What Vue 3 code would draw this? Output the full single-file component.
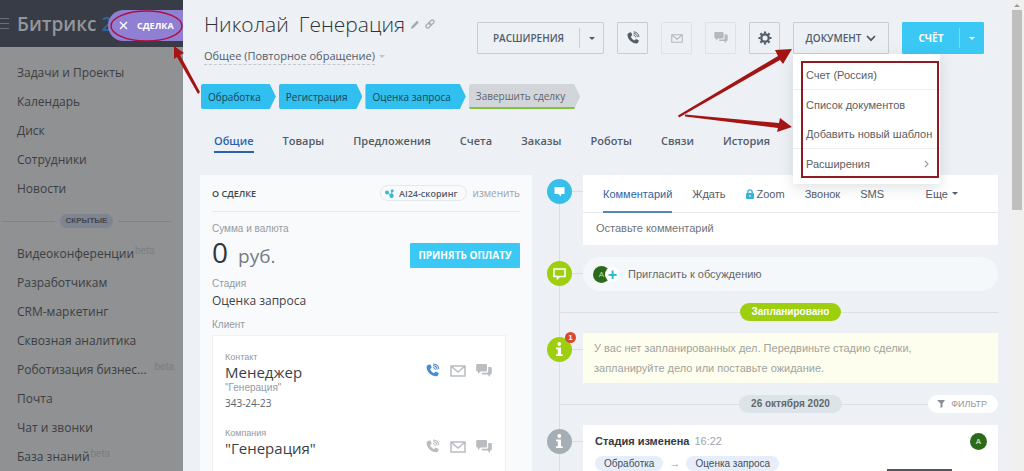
<script setup>
import { ref } from 'vue'

const menuTop = ['Задачи и Проекты', 'Календарь', 'Диск', 'Сотрудники', 'Новости'].map((text) => ({ text }))
const menuHidden = [
  { text: 'Видеоконференции', beta: true },
  { text: 'Разработчикам' },
  { text: 'CRM-маркетинг' },
  { text: 'Сквозная аналитика' },
  { text: 'Роботизация бизнес...', beta: true, wide: true },
  { text: 'Почта' },
  { text: 'Чат и звонки' },
  { text: 'База знаний', beta: true },
]
const stages = ['Обработка', 'Регистрация', 'Оценка запроса']
const tabs = ['Общие', 'Товары', 'Предложения', 'Счета', 'Заказы', 'Роботы', 'Связи', 'История']
const activeTab = ref('Общие')
const clients = [
  { kind: 'Контакт', name: 'Менеджер', note: '"Генерация"', phone: '343-24-23', callable: true },
  { kind: 'Компания', name: '"Генерация"' },
]
const comment = ref('')
</script>

<template>
  <div class="page">
    <svg class="sprite" aria-hidden="true">
      <symbol id="i-phone" viewBox="0 0 16 16">
        <path fill="currentColor" d="M3.2 2.2 5 1.5c.5-.2.9 0 1.100.5l.9 2.300c.2.500 0 .9-.4 1.200l-1.200.9c.8 2.200 2.200 3.600 4.300 4.500l1-1.200c.3-.4.8-.5 1.200-.3l2.200 1c.5.3.6.7.4 1.200l-.8 1.700c-.3.6-.8.9-1.500.9C6.500 14.100 1.900 9.400 1.700 4.300c0-1 .5-1.700 1.500-2.100z" />
        <path fill="none" stroke="currentColor" stroke-width="1.100" d="M8.600 4.700c1.500.2 2.300 1.100 2.500 2.600M8.700 2.800c2.500.2 4 1.700 4.300 4.200M8.800 1c3.600.2 5.700 2.300 6 5.700" />
      </symbol>
      <symbol id="i-mail" viewBox="0 0 16 12">
        <path fill="none" stroke="currentColor" stroke-width="1.500" d="M1 1h14v10H1zM1.500 1.500 8 7l6.500-5.500" />
      </symbol>
      <symbol id="i-chat" viewBox="0 0 16 14">
        <path fill="currentColor" d="M1.500 0h8.200c.8 0 1.300.5 1.300 1.300v4.900c0 .8-.5 1.300-1.300 1.300H4.500L2 10V7.500h-.5C.7 7.500.200 7 .200 6.200V1.300C.200.500.700 0 1.500 0zM12.200 3h2.300c.8 0 1.300.5 1.300 1.300v4.900c0 .8-.5 1.300-1.300 1.300H14V13l-2.500-2.500H7c-.8 0-1.300-.5-1.300-1.300v-.5h4.700c1.100 0 1.800-.7 1.800-1.800z" />
      </symbol>
    </svg>

    <aside class="side">
      <header class="brand">
        <span class="burger"><i></i><i></i><i></i></span>
        <span class="logo">Битрикс <b>24</b></span>
        <button class="deal-tab">
          <svg width="9" height="9" viewBox="0 0 9 9"><path d="M1 1l7 7M8 1 1 8" fill="none" stroke="#fff" stroke-width="1.400" /></svg>
          СДЕЛКА
        </button>
        <svg class="ring" viewBox="0 0 73 32"><ellipse cx="36.500" cy="16" rx="35.500" ry="15" fill="none" stroke="#ad1040" stroke-width="1.500" /></svg>
      </header>
      <nav class="menu">
        <a v-for="m in menuTop" :key="m.text" href="#">{{ m.text }}</a>
        <div class="hidden-line"><span>СКРЫТЫЕ</span></div>
        <a v-for="m in menuHidden" :key="m.text" href="#">{{ m.text }}<sup v-if="m.beta" :class="{ wide: m.wide }">beta</sup></a>
      </nav>
    </aside>

    <main class="panel">
      <header class="top">
        <div class="heading">
          <h1>
            <span>Николай</span><span>Генерация</span>
            <svg class="pen" width="8" height="9" viewBox="0 0 8 9"><path d="M0 9l.6-2.600L6 .8 7.800 2.500 2.500 8z" fill="#a4a9ae" /></svg>
            <svg width="10" height="10" viewBox="0 0 10 10"><g fill="none" stroke="#a4a9ae" stroke-width="1.200" transform="rotate(-45 5 5)"><rect x="0" y="3.200" width="5.600" height="3.600" rx="1.800" /><rect x="4.400" y="3.200" width="5.600" height="3.600" rx="1.800" /></g></svg>
          </h1>
          <button class="funnel"><span>Общее (Повторное обращение)</span><i class="caret pale"></i></button>
        </div>
        <div class="actions">
          <div class="split">
            <button class="split-main">РАСШИРЕНИЯ</button>
            <button class="split-drop" aria-label="Ещё расширения"><i class="caret"></i></button>
          </div>
          <button class="square" aria-label="Позвонить"><svg width="14" height="14"><use href="#i-phone" /></svg></button>
          <button class="square dim" aria-label="Письмо"><svg width="12" height="9"><use href="#i-mail" /></svg></button>
          <button class="square dim" aria-label="Чат"><svg width="14" height="12"><use href="#i-chat" /></svg></button>
          <button class="square" aria-label="Настройки">
            <svg width="14" height="14" viewBox="0 0 14 14"><circle cx="7" cy="7" r="3.700" fill="none" stroke="#525c69" stroke-width="2.200" /><path d="M7 .5v2M7 11.500v2M.5 7h2M11.500 7h2M2.400 2.400l1.400 1.400M10.200 10.200l1.400 1.400M2.400 11.600l1.400-1.400M10.200 3.800l1.400-1.400" stroke="#525c69" stroke-width="2.200" /></svg>
          </button>
          <div class="doc">
            <button class="doc-btn">ДОКУМЕНТ
              <svg width="10" height="7" viewBox="0 0 10 7"><path d="M1 1l4 4.200L9 1" fill="none" stroke="#525c69" stroke-width="1.800" /></svg>
            </button>
            <div class="drop">
              <div class="group"><button>Счет (Россия)</button></div>
              <div class="group"><button>Список документов</button><button>Добавить новый шаблон</button></div>
              <div class="group"><button>Расширения
                <svg width="5" height="8" viewBox="0 0 5 8"><path d="M1 1l3 3-3 3" fill="none" stroke="#9a9fa5" stroke-width="1.200" /></svg>
              </button></div>
            </div>
          </div>
          <div class="split blue">
            <button class="split-main">СЧЁТ</button>
            <button class="split-drop" aria-label="Ещё счёт"><i class="caret"></i></button>
          </div>
        </div>
      </header>

      <div class="stages">
        <button v-for="s in stages" :key="s">{{ s }}</button>
        <button class="last">Завершить сделку</button>
      </div>

      <nav class="tabs">
        <a v-for="t in tabs" :key="t" href="#" :class="{ on: t === activeTab }" @click.prevent="activeTab = t">{{ t }}</a>
      </nav>

      <div class="columns">
        <section class="card">
          <header class="card-head">
            <h2>О СДЕЛКЕ</h2>
            <button class="score">
              <svg width="9" height="9" viewBox="0 0 9 9"><path d="M1.800 3.500 6.500 6.500 7 1.500" fill="none" stroke="#3ab9d4" /><circle cx="2" cy="3.500" r="2" fill="#3ab9d4" /><circle cx="7.200" cy="1.800" r="1.500" fill="#3ab9d4" /><circle cx="6.500" cy="6.800" r="2.200" fill="#3ab9d4" /></svg>
              AI24-скоринг
            </button>
            <a href="#" class="edit">изменить</a>
          </header>
          <p class="label">Сумма и валюта</p>
          <div class="sum">
            <span class="num">0</span><span class="cur">руб.</span>
            <button>ПРИНЯТЬ ОПЛАТУ</button>
          </div>
          <p class="label">Стадия</p>
          <p class="value">Оценка запроса</p>
          <p class="label client">Клиент</p>
          <div class="clients">
            <div v-for="c in clients" :key="c.kind" class="client-row">
              <div class="who">
                <small>{{ c.kind }}</small>
                <strong>{{ c.name }}</strong>
                <small v-if="c.note" class="note">{{ c.note }}</small>
                <span v-if="c.phone">{{ c.phone }}</span>
              </div>
              <div class="links">
                <button :class="{ live: c.callable }" aria-label="Позвонить"><svg width="15" height="15"><use href="#i-phone" /></svg></button>
                <button aria-label="Письмо"><svg width="16" height="12"><use href="#i-mail" /></svg></button>
                <button aria-label="Чат"><svg width="16" height="14"><use href="#i-chat" /></svg></button>
              </div>
            </div>
          </div>
        </section>

        <section class="feed">
          <div class="event">
            <span class="dot cyan"><svg width="11" height="11" viewBox="0 0 11 11"><path d="M.5 1h10v7H7v2.500L4.500 8h-4z" fill="#fff" /></svg></span>
            <div class="body comment">
              <div class="kinds">
                <a href="#" class="on">Комментарий</a><a href="#">Ждать</a>
                <a href="#" class="zoom"><svg width="8" height="10" viewBox="0 0 8 10"><rect y="4" width="8" height="6" rx="1" fill="#35b3dd" /><path d="M1.800 4.500V3a2.200 2.200 0 0 1 4.400 0v1.500" fill="none" stroke="#35b3dd" stroke-width="1.300" /><path d="M4 6v2" stroke="#fff" /></svg>Zoom</a>
                <a href="#">Звонок</a><a href="#">SMS</a>
                <a href="#" class="more">Еще<i class="caret"></i></a>
              </div>
              <input v-model="comment" type="text" placeholder="Оставьте комментарий" aria-label="Комментарий" />
            </div>
          </div>

          <div class="event">
            <span class="dot lime"><svg width="13" height="12" viewBox="0 0 13 12"><path d="M1 1h11v7.500H6.500L4.500 10.500v-2H1z" fill="none" stroke="#fff" stroke-width="1.600" /></svg></span>
            <button class="body invite">
              <span class="ava">A</span><span class="plus">+</span>Пригласить к обсуждению
            </button>
          </div>

          <div class="mark"><span class="planned">Запланировано</span></div>

          <div class="event">
            <span class="dot lime"><svg width="9" height="15" viewBox="0 0 9 15"><circle cx="4.300" cy="2" r="1.900" fill="#fff" /><path d="M1 5.500h5v6.700h1.700V14H1v-1.800h1.800V7.300H1z" fill="#fff" /></svg><em>1</em></span>
            <div class="body notice">У вас нет запланированных дел. Передвиньте стадию сделки, запланируйте дело или поставьте ожидание.</div>
          </div>

          <div class="mark">
            <span class="date">26 октября 2020</span>
            <button class="filter"><svg width="8" height="8" viewBox="0 0 8 8"><path d="M0 0h8L5.500 3.500V7l-2 1V3.500z" fill="#8b9095" /></svg>ФИЛЬТР</button>
          </div>

          <div class="event">
            <span class="dot grey"><svg width="9" height="15" viewBox="0 0 9 15"><circle cx="4.300" cy="2" r="1.900" fill="#fff" /><path d="M1 5.500h5v6.700h1.700V14H1v-1.800h1.800V7.300H1z" fill="#fff" /></svg></span>
            <div class="body change">
              <div class="change-head"><b>Стадия изменена</b><time>16:22</time><span class="user">A</span></div>
              <div class="flow"><span>Обработка</span><i>→</i><span>Оценка запроса</span></div>
            </div>
          </div>
        </section>
      </div>
      <span class="status"></span>
      <svg class="arrows right" width="116" height="88" viewBox="0 0 116 88"><g fill="#a31414"><path d="M1 75.500 101 16l-3-6 17-1-9 15-3-4L2 77.500z" /><path d="M8 74.500 102 83l1-5 12 9-15 5 1-4L8 76.500z" /></g></svg>
    </main>

    <div class="scroll"><i></i><span></span></div>
    <svg class="arrows left" width="30" height="50" viewBox="0 0 30 50"><path d="M2 0 12 7 8 9 28 46l-2 2L5 11 2 13z" fill="#a31414" /></svg>
  </div>
</template>

<style>
body { overflow: hidden; }
</style>

<style scoped>
* { box-sizing: border-box; }
.page { position: relative; display: flex; height: 100vh; overflow: hidden; background: #edf1f5; color: #525c69; font-family: "Open Sans", "Noto Sans", sans-serif; font-size: 11px; }
.sprite { position: absolute; width: 0; height: 0; }
button { margin: 0; padding: 0; border: 0; background: none; color: inherit; font: inherit; white-space: nowrap; cursor: pointer; }
a { color: inherit; text-decoration: none; }
h1, h2, p { margin: 0; font-weight: 400; }
svg { flex: none; }
.caret { border: 4px solid transparent; border-top-color: currentColor; border-bottom: 0; }

.side { flex: none; width: 183px; background: #8f9193; }
.brand { position: relative; display: flex; align-items: center; height: 47px; background: #383c46; }
.burger { display: grid; gap: 4px; width: 9px; margin-right: 8px; }
.burger i { height: 1px; background: #69707a; }
.logo { color: #93969b; font-size: 19px; font-weight: 600; white-space: nowrap; }
.logo b { color: #276a91; font-weight: 600; }
.deal-tab { position: absolute; top: 10px; right: 0; display: flex; align-items: center; gap: 9px; width: 75px; height: 31px; padding-left: 11px; border-radius: 16px 0 0 16px; background: #9080d4; color: #fff; font-size: 9px; font-weight: 700; }
.ring { position: absolute; top: 10px; right: 0; width: 73px; height: 32px; }
.menu { padding-top: 11px; }
.menu a { display: block; height: 29px; padding-left: 17px; color: #3c3e41; font-size: 12px; line-height: 29px; white-space: nowrap; }
.menu sup { position: relative; bottom: 4px; margin-left: 1px; color: #7a7d81; font-family: "Liberation Sans", sans-serif; font-size: 10px; line-height: 10px; vertical-align: baseline; }
.menu sup.wide { margin-left: 8px; }
.hidden-line { display: flex; align-items: center; gap: 5px; height: 36px; padding: 0 12px 0 2px; }
.hidden-line::before, .hidden-line::after { content: ""; flex: 1; height: 1px; background: #7e8389; }
.hidden-line span { padding: 0 6px; border-radius: 7px; background: #7f858f; color: #42464e; font: 700 8px/14px "Liberation Sans", sans-serif; }

.panel { position: relative; flex: 1; min-width: 0; }
.top { display: flex; justify-content: space-between; height: 83px; padding: 0 26px 0 21px; }
.heading { padding-top: 6px; }
h1 { display: flex; align-items: center; gap: 10px; height: 36px; color: #2f3338; font-size: 21px; font-weight: 300; white-space: nowrap; }
h1 svg { margin-left: -4px; }
.funnel { display: flex; align-items: center; gap: 4px; margin-top: 5px; }
.funnel span { border-bottom: 1px dashed #c3c7cb; line-height: 17px; }
.caret.pale { border-width: 3px 3px 0; color: #c0c5ca; }
.actions { display: flex; gap: 13px; height: 32px; margin-top: 22px; font-size: 10px; }
.split, .square, .doc-btn { display: flex; align-items: center; border: 1px solid #c6cdd3; border-radius: 1px; }
.split { width: 127px; font-weight: 600; }
.split-main { flex: 1; text-align: center; }
.split-drop { display: grid; place-items: center; width: 24px; height: 20px; border-left: 1px solid #c6cdd3; }
.split-drop .caret { border-width: 3px 3px 0; }
.split.blue { width: 82px; border-color: #3bc8f5; background: #3bc8f5; color: #fff; font-weight: 700; }
.blue .split-drop { border-color: #7adcf9; }
.square { justify-content: center; width: 31px; }
.square.dim { border-color: #dde2e6; color: #b4b9be; }
.doc { position: relative; width: 96px; }
.doc-btn { justify-content: center; gap: 5px; width: 100%; height: 32px; font-weight: 600; }
.drop { position: absolute; z-index: 3; top: 32px; left: 0; width: 147px; padding: 6px 0; background: #fff; box-shadow: 0 4px 12px rgba(80, 95, 110, .18); }
.drop::after { content: ""; position: absolute; top: 7px; right: 1px; bottom: 6px; left: 8px; border: 2px solid #8e1a22; pointer-events: none; }
.group + .group { border-top: 1px solid #eceef0; }
.drop button { display: flex; align-items: center; justify-content: space-between; width: 100%; height: 29px; padding: 0 11px 0 13px; color: #5a5e63; font: 11px "Liberation Sans", sans-serif; }

.stages { display: flex; gap: 3px; padding: 1px 0 0 18px; }
.stages button { height: 25px; padding: 0 15px 0 7px; border-radius: 2px; background: #31bff0; color: #1c4251; font-size: 10px; clip-path: polygon(0 0, calc(100% - 6px) 0, 100% 50%, calc(100% - 6px) 100%, 0 100%); }
.stages .last { border-bottom: 2px solid #7fc43a; background: #d2d6da; color: #5d6268; }

.tabs { display: flex; gap: 29px; margin: 21px 0 22px; padding-left: 31px; font-weight: 600; line-height: 21px; }
.tabs a { border-bottom: 2px solid transparent; white-space: nowrap; }
.tabs .on { border-color: #2b62ae; color: #2b62ae; }

.columns { display: grid; grid-template-columns: 332fr 451fr; gap: 15px; padding: 0 12px 0 17px; }
.card { padding: 0 12px; background: #f9fafc; min-height: 300px; }
.card-head { display: flex; align-items: center; gap: 6px; height: 37px; border-bottom: 1px solid #e6e9ec; }
h2 { flex: 1; color: #3e454d; font-size: 9px; font-weight: 600; }
.score { display: flex; align-items: center; gap: 5px; height: 16px; padding: 0 8px 0 4px; border: 1px solid #e3e8eb; border-radius: 8px; font-size: 9px; font-weight: 600; }
.edit { color: #9ba0a6; font-size: 10px; }
.label { color: #959ba2; font: 10px/14px "Liberation Sans", sans-serif; }
.card-head + .label { margin-top: 10px; }
.sum { display: flex; align-items: baseline; height: 38px; margin-bottom: 3px; }
.num { margin-right: 10px; color: #30363d; font-size: 28px; line-height: 32px; }
.cur { flex: 1; color: #747b83; font-size: 19px; line-height: 32px; }
.sum button { align-self: center; width: 110px; height: 25px; border-radius: 1px; background: #3bc8f5; color: #fff; font-size: 10px; font-weight: 700; }
.value { color: #3e444b; font-size: 12px; line-height: 20px; }
.label.client { margin-top: 7px; }
.clients { display: grid; gap: 15px; margin: 3px 14px 0 0; padding: 15px 13px 20px 12px; border: 1px solid #eff1f3; background: #fff; }
.client-row { display: flex; justify-content: space-between; }
.who { display: grid; align-content: start; }
.who small { color: #959ba2; font: 9px/12px "Liberation Sans", sans-serif; }
.who .note { font-size: 10px; line-height: 13px; }
.who strong { color: #3a3f45; font-size: 15px; font-weight: 400; line-height: 18px; }
.who span { color: #5c6269; font-size: 10px; line-height: 18px; }
.links { display: flex; align-items: center; gap: 10px; height: 39px; color: #b9bdc1; }
.links .live { color: #4a8dca; }
.links button { display: grid; }

.feed { position: relative; display: grid; align-content: start; gap: 12px; font-family: "Liberation Sans", sans-serif; }
.feed::before { content: ""; position: absolute; top: 16px; bottom: 0; left: 12px; width: 1px; background: #d9dee3; }
.event { position: relative; display: flex; gap: 11px; }
.event::before { content: ""; position: absolute; top: 16px; left: 25px; width: 11px; height: 1px; background: #d9dee3; }
.dot { position: relative; flex: none; display: grid; place-items: center; width: 25px; height: 25px; margin-top: 4px; border-radius: 50%; }
.dot.cyan { background: #35bfea; }
.dot.lime { background: #9dcf0f; }
.dot.grey { background: #a5adb5; }
.dot em { position: absolute; top: -5px; right: -4px; width: 11px; height: 11px; border-radius: 50%; background: #d64b2e; color: #fff; font: 700 8px/11px "Liberation Sans", sans-serif; text-align: center; }
.body { flex: 1; min-width: 0; background: #fff; }
.kinds { display: flex; gap: 20px; height: 38px; padding: 0 40px 0 20px; border-bottom: 1px solid #e7eaed; line-height: 38px; }
.kinds .on { border-bottom: 2px solid #5a87b8; color: #2f62a0; height: 38px; }
.kinds .zoom { display: flex; align-items: center; gap: 3px; }
.kinds .more { display: flex; align-items: center; gap: 4px; margin-left: auto; }
.more .caret { border-width: 3px 3px 0; }
.comment input { display: block; width: 100%; height: 32px; padding: 0 13px 3px; border: 0; outline: 0; background: none; font: 11px "Liberation Sans", sans-serif; }
.comment input::placeholder { color: #70757b; opacity: 1; }
.invite { display: flex; align-items: center; height: 34px; padding-left: 10px; border-radius: 17px; background: #f5f8fa; color: #62676d; }
.ava, .user { width: 17px; height: 17px; border-radius: 50%; background: #2b6a1b; color: #bcdca9; font-size: 8px; line-height: 17px; text-align: center; }
.plus { width: 15px; height: 15px; margin: 0 8px 0 -5px; border-radius: 50%; background: #fff; color: #2fb5c6; font-size: 16px; font-weight: 700; line-height: 15px; text-align: center; }
.mark { position: relative; display: flex; align-items: center; justify-content: center; height: 18px; margin-left: 36px; }
.mark::before { content: ""; position: absolute; top: 9px; right: 0; left: -24px; height: 1px; background: #dbe0e5; }
.mark span, .mark button { position: relative; border-radius: 9px; font-weight: 700; line-height: 18px; }
.planned { padding: 0 12px; background: #9dcf0f; color: #fff; font-size: 10px; }
.date { padding: 0 12px; background: #dde4e9; font-size: 10px; color: #62686e; }
.mark .filter { position: absolute; right: 0; display: flex; align-items: center; gap: 6px; height: 18px; padding: 0 11px 0 9px; background: #fff; color: #92979c; font-size: 9px; font-weight: 400; }
.notice { padding: 5px 72px 5px 11px; background: #fefeee; color: #a0a39f; line-height: 20px; }
.change { padding: 7px 11px 12px 12px; }
.change-head { display: flex; align-items: center; gap: 5px; height: 18px; }
.change-head b { color: #333941; }
.change-head time { color: #a0a5aa; flex: 1; }
.user { font-weight: 700; }
.flow { display: flex; align-items: center; gap: 6px; margin-top: 6px; }
.flow span { padding: 0 9px; border-radius: 8px; background: #e6eefb; font-size: 10px; line-height: 15px; color: #474e57; }
.flow i { color: #9aa0a6; font-style: normal; line-height: 15px; }
.status { position: absolute; right: 58px; bottom: 0; width: 65px; height: 2px; background: #55565b; }

.scroll { flex: none; width: 14px; padding: 4px 2px 0; background: #f0f0f0; }
.scroll i { display: block; width: 6px; margin: 0 auto 3px; border: 3px solid transparent; border-top: 0; border-bottom-color: #9a9a9a; }
.scroll span { display: block; height: 200px; background: #bfbfbf; }
.arrows { position: absolute; z-index: 4; overflow: visible; pointer-events: none; }
.arrows.left { top: 46px; left: 172px; }
.arrows.right { top: 40px; right: 217px; }
</style>
